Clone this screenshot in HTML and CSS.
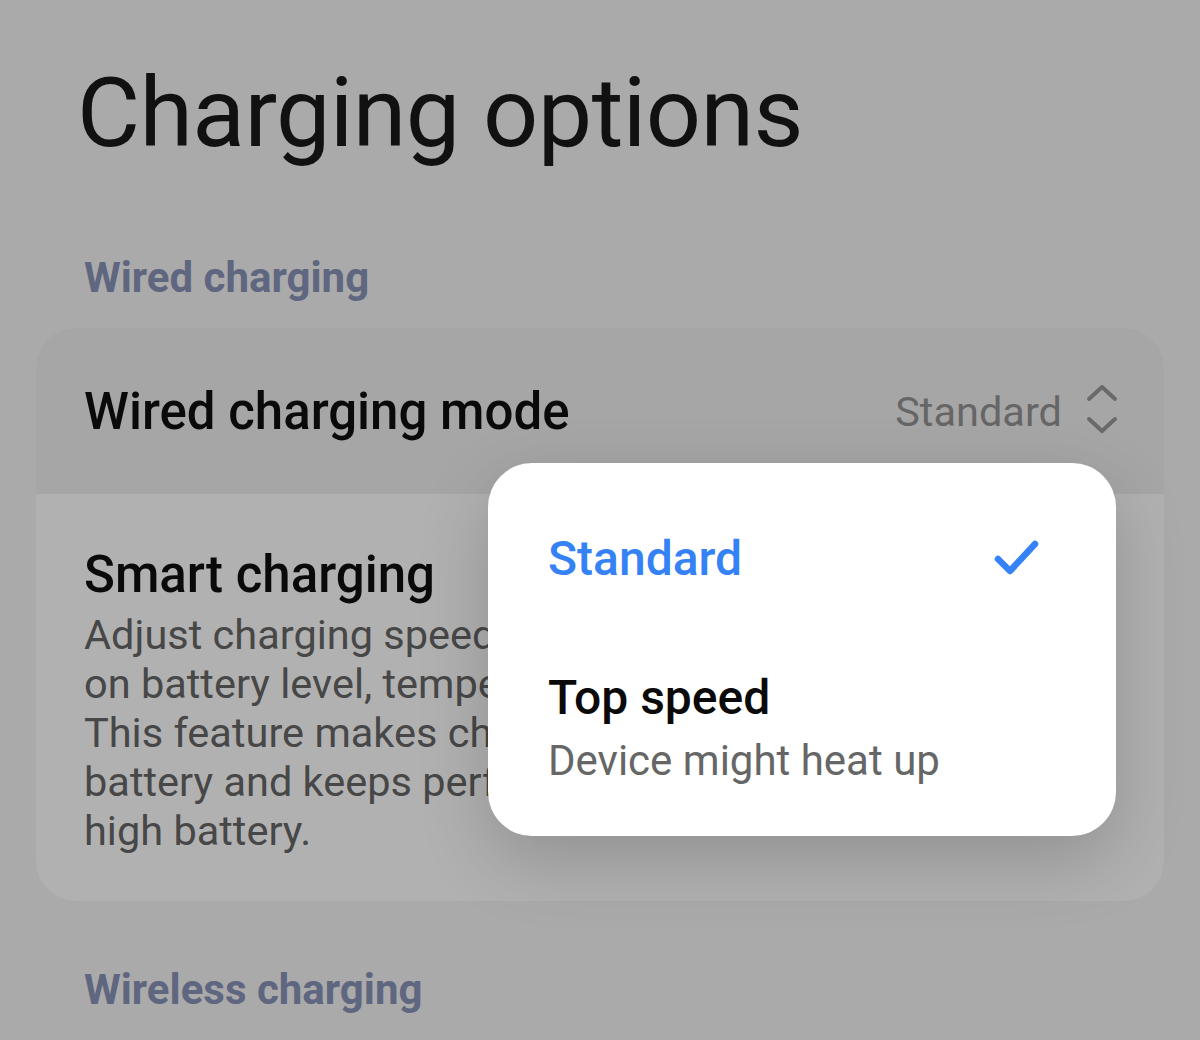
FILE: index.html
```html
<!DOCTYPE html>
<html>
<head>
    <meta charset="UTF-8">
    <title>Charging options</title>
    <link rel="stylesheet" href="styles.css">
</head>
<body>
    <div class="screen">
        <h1 class="title">Charging options</h1>

        <div class="section-label">Wired charging</div>

        <div class="card">
            <div class="row row-pressed">
                <span class="row-title">Wired charging mode</span>
                <span class="row-value">
                    Standard
                    <svg class="updown" width="32" height="50" viewBox="0 0 32 50">
                        <path d="M3 15 L16 3 L29 15" />
                        <path d="M3 35 L16 47 L29 35" />
                    </svg>
                </span>
            </div>
            <div class="row row-text">
                <div class="row-title">Smart charging</div>
                <div class="row-desc">
                    Adjust charging speed based<br>
                    on battery level, temperature<br>
                    This feature makes charging<br>
                    battery and keeps performance<br>
                    high battery.
                </div>
            </div>
        </div>

        <div class="section-label section-next">Wireless charging</div>

        <!-- mode picker, opened from the row above -->
        <div class="picker">
            <div class="picker-item picker-selected">
                <span class="picker-title">Standard</span>
                <svg class="check" width="46" height="40" viewBox="0 0 46 40">
                    <path d="M4 21 L16 33 L41 6" />
                </svg>
            </div>
            <div class="picker-item">
                <div>
                    <div class="picker-title">Top speed</div>
                    <div class="picker-sub">Device might heat up</div>
                </div>
            </div>
        </div>
    </div>
</body>
</html>
```

FILE: styles.css
```css
html, body {
    margin: 0;
    background: #aaaaaa;
}
body {
    font-family: Roboto, "Noto Sans", sans-serif;
    color: #111;
}
.screen {
    position: relative;
    height: 1040px;
    overflow: hidden;
    padding: 0 36px;
}
.title {
    margin: 0;
    padding: 53px 0 0 41px;
    font-size: 97px;
    font-weight: 400;
    line-height: 120px;
    letter-spacing: -0.6px;
}
.section-label {
    padding: 77px 0 0 48px;
    font-size: 42px;
    font-weight: 700;
    line-height: 56px;
    color: #5f6680;
}
.section-next {
    padding-top: 61px;
}
.card {
    margin-top: 22px;
    background: #b1b1b1;
    border-radius: 40px;
    overflow: hidden;
}
.row {
    padding: 0 48px;
}
.row-pressed {
    height: 166px;
    padding-right: 46px;
    background: #a6a6a6;
    display: flex;
    align-items: center;
    justify-content: space-between;
}
.row-title {
    font-size: 51px;
    font-weight: 500;
    color: #0a0a0a;
}
.row-value {
    display: flex;
    align-items: center;
    gap: 24px;
    font-size: 41.5px;
    color: #666;
}
.updown {
    margin-top: -4px;
}
.updown path {
    fill: none;
    stroke: #6a6a6a;
    stroke-width: 4;
    stroke-linecap: round;
    stroke-linejoin: round;
}
.row-text {
    padding-top: 51px;
    padding-bottom: 46px;
}
.row-text .row-title {
    line-height: 60px;
}
.row-desc {
    margin-top: 5px;
    font-size: 41.5px;
    line-height: 49px;
    color: #474747;
}
.picker {
    position: absolute;
    left: 488px;
    top: 463px;
    width: 628px;
    height: 373px;
    box-sizing: border-box;
    padding: 30px 60px;
    background: #fff;
    border-radius: 44px;
    box-shadow: 0 24px 70px rgba(0, 0, 0, 0.18);
}
.picker-item {
    display: flex;
    align-items: center;
    justify-content: space-between;
}
.picker-selected {
    height: 130px;
    margin-bottom: 46px;
}
.picker-title {
    font-size: 48px;
    font-weight: 500;
    color: #0a0a0a;
}
.picker-selected .picker-title {
    color: #3482f6;
}
.picker-sub {
    margin-top: 10px;
    font-size: 42px;
    color: #666;
}
.check {
    margin-right: 16px;
}
.check path {
    fill: none;
    stroke: #3482f6;
    stroke-width: 6.5;
    stroke-linecap: round;
    stroke-linejoin: round;
}
```
